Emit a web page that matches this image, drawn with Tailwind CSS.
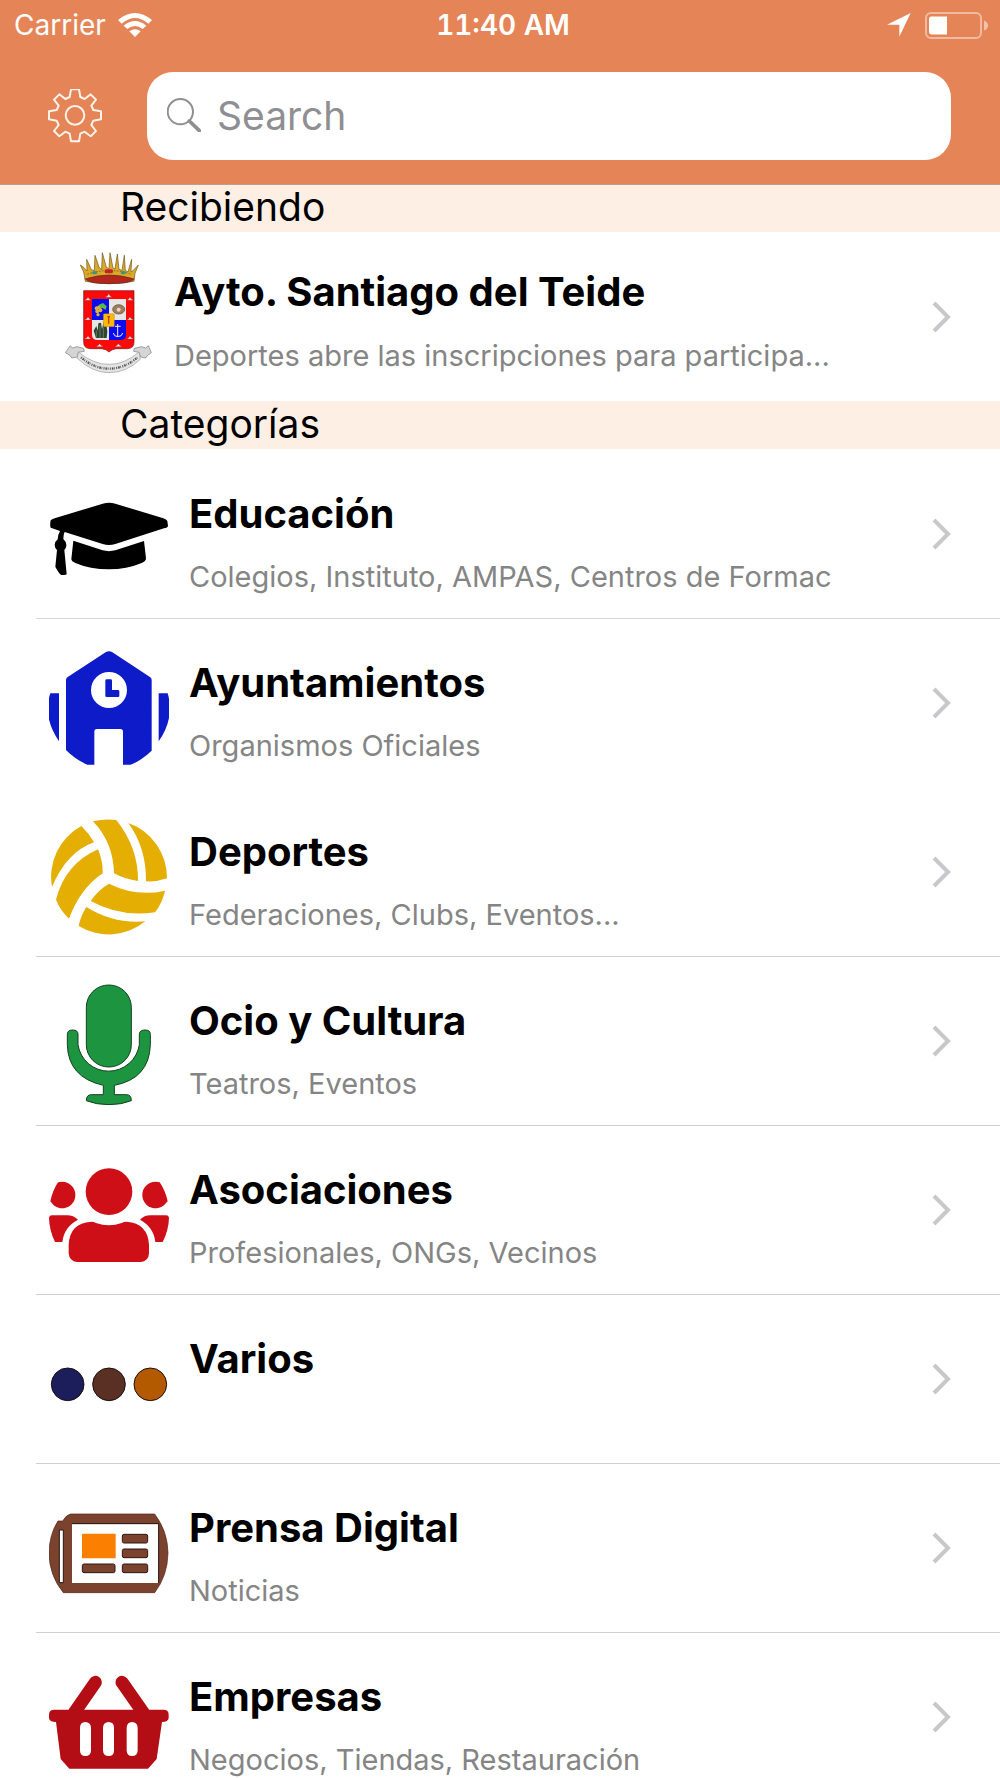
<!DOCTYPE html>
<html lang="es">
<head>
    <meta charset="UTF-8">
    <meta name="viewport" content="width=device-width, initial-scale=1.0">
    <title>Categorías</title>
    <script src="https://cdn.jsdelivr.net/npm/@tailwindcss/browser@4"></script>
</head>
<body class="h-screen overflow-hidden bg-white font-['Inter',sans-serif] text-black">
    <header class="bg-[#e58457] border-b border-[#b99f8d]">
        <!-- Status bar -->
        <div class="grid grid-cols-[1fr_auto_1fr] items-center h-[50px] pl-[14px] pr-2 text-white text-[28px]">
            <div class="flex items-center gap-3">
                <span>Carrier</span>
                <svg class="w-[34px] h-6" viewBox="0 0 102 72" fill="currentColor">
                    <path d="M0 21Q51 -21 102 21L91 32Q51 -2 11 32Z"></path>
                    <path d="M17 38Q51 10 85 38L74 48Q51 30 28 48Z"></path>
                    <path d="M34 55Q51 42 68 55L51 72Z"></path>
                </svg>
            </div>
            <div class="font-semibold tabular-nums">11:40 AM</div>
            <div class="flex items-center justify-end gap-[14px]">
                <svg class="w-6 h-6" viewBox="0 0 72 72" fill="currentColor">
                    <path d="M71 0L37 71V35H0Z"></path>
                </svg>
                <svg class="w-[67px] h-[27px]" viewBox="0 0 67 27">
                    <rect x="1" y="1" width="55" height="25" rx="5" fill="none" stroke="white" stroke-opacity=".45" stroke-width="2"></rect>
                    <path d="M6 4.5H22V22.5H7Q4 22.5 4 19.500V7Q4 4.500 6 4.500Z" fill="white"></path>
                    <path d="M59 8.500Q63 10 63 13.500T59 18.500Z" fill="white" fill-opacity=".5"></path>
                </svg>
            </div>
        </div>
        <!-- Settings and search -->
        <div class="flex items-center gap-[45px] pl-12 pr-[49px] pt-[22px] pb-6">
            <button type="button" aria-label="Ajustes" class="shrink-0">
                <svg class="w-[54px] h-[54px]" viewBox="-81 -79 162 162" fill="none" stroke="#fff3ec" stroke-width="6" stroke-linejoin="round">
                    <path d="M-12 -78L12 -78L16 -55L29 -49L47 -63L63 -47L49 -29L55 -16L78 -12L78 12L55 16L49 29L63 47L47 63L29 49L16 55L12 78L-12 78L-16 55L-29 49L-47 63L-63 47L-49 29L-55 16L-78 12L-78 -12L-55 -16L-49 -29L-63 -47L-47 -63L-29 -49L-16 -55Z"></path>
                    <circle r="28"></circle>
                </svg>
            </button>
            <div class="flex flex-1 items-center gap-4 h-[88px] pl-5 pr-5 pb-0.5 bg-white rounded-[26px]">
                <svg class="w-[34px] h-[34px] shrink-0" viewBox="0 0 102 102" fill="none" stroke="#8e8e93">
                    <circle cx="40" cy="41" r="38" stroke-width="6"></circle>
                    <path d="M67 69L97 98" stroke-width="11" stroke-linecap="round"></path>
                </svg>
                <label for="search" class="sr-only">Search</label>
                <input id="search" type="search" placeholder="Search" class="flex-1 min-w-0 h-full text-[39px] outline-none placeholder:text-[#8e8e93]">
            </div>
        </div>
    </header>

    <main>
        <h2 class="h-[47px] pl-[120px] bg-[#feefe4] text-[39px] leading-[44px]">Recibiendo</h2>
        <a href="#ayto" class="flex items-center h-[169px] pl-[65px] pr-[49px]">
            <svg class="w-[87px] h-[122px] mb-2 shrink-0" viewBox="76 36 261 366">
                <!-- Crown -->
                <path d="M122 75L133 83L142 93L141 58L155 89L164 92L166 46L179 84L186 88L188 38L200 82L208 86L211 38L220 84L226 87L233 42L238 88L247 91L254 46L257 91L265 96L276 58L274 96L281 91L296 75L286 100L283 124Q208 138 137 124L132 96Z" fill="#dba928" stroke="#6d5420" stroke-width="2"></path>
                <path d="M137 117Q208 93 283 117Q274 131 208 131Q148 131 137 117Z" fill="#b3261c" stroke="#5f2c16" stroke-width="2"></path>
                <path d="M143 103Q208 80 276 103" fill="none" stroke="#8f661a" stroke-width="3" stroke-dasharray="5 4"></path>
                <rect x="195" y="88" width="25" height="12" rx="5" fill="#c4202a"></rect>
                <ellipse cx="165" cy="98" rx="8" ry="5" fill="#37947d"></ellipse>
                <ellipse cx="251" cy="98" rx="8" ry="5" fill="#37947d"></ellipse>
                <!-- Shield -->
                <path d="M132 152H283V307Q283 325 264 326H232Q216 327 208 336Q200 327 184 326H151Q132 325 132 307Z" fill="#fb0a0a" stroke="#7c1010" stroke-width="2"></path>
                <path d="M157 177H208V240H157Z" fill="#0b0bf0"></path>
                <path d="M208 177H259V240H208Z" fill="#e6e6e6"></path>
                <path d="M157 240H208V300H174Q157 300 157 284Z" fill="#e6e6e6"></path>
                <path d="M208 240H259V284Q259 300 242 300H208Z" fill="#0b0bf0"></path>
                <g fill="#e0b13a">
                    <circle cx="171" cy="205" r="6"></circle><circle cx="179" cy="202" r="6"></circle><circle cx="173" cy="214" r="6"></circle>
                    <circle cx="182" cy="211" r="6"></circle><circle cx="175" cy="224" r="5"></circle>
                </g>
                <path d="M178 194L190 189L201 199L198 209L188 204L181 203Z" fill="#58b947"></path>
                <ellipse cx="237" cy="208" rx="18" ry="14" fill="#a07b5c" stroke="#5b4434" stroke-width="2"></ellipse>
                <ellipse cx="237" cy="209" rx="6" ry="6" fill="#e7d8c8"></ellipse>
                <path d="M169 294L162 272L170 258L174 272L176 250L184 248L187 268L192 246L200 254L203 274L201 294Z" fill="#2d4530"></path>
                <path d="M170 272V292M181 256V294M191 262V294" stroke="#809280" stroke-width="2"></path>
                <path d="M234 252V290M226 259H243M221 279Q223 290 234 290Q247 290 249 279" fill="none" stroke="#e9ebff" stroke-width="3"></path>
                <rect x="191" y="221" width="33" height="39" rx="3" fill="#fcb908" stroke="#a56f0c"></rect>
                <path d="M207 230V251M203 230H211" stroke="#d03b12" stroke-width="4"></path>
                <g fill="#f2e6e2" stroke="#8c2a22">
                    <path d="M196 172L203 168L207 161L211 167L217 172Z"></path>
                    <path d="M134 181L141 177L145 172L149 177L154 181ZM262 181L267 177L271 172L275 177L282 181Z"></path>
                    <path d="M134 240L141 236L145 231L149 236L154 240ZM262 240L267 236L271 231L275 236L282 240Z"></path>
                    <path d="M134 297L141 293L145 288L149 293L154 297ZM262 297L267 293L271 288L275 293L282 297Z"></path>
                    <path d="M169 320L176 316L180 311L184 316L191 320ZM225 320L232 316L236 311L240 316L247 320Z"></path>
                </g>
                <!-- Ribbon -->
                <path d="M77 338L92 317L98 324L112 320L131 325L134 334L116 337L113 351L96 354L91 346Z" fill="#d5d5d5" stroke="#777777" stroke-width="2"></path>
                <path d="M335 338L326 317L318 324L306 320L284 325L282 334L298 337L303 351L318 354L324 346Z" fill="#d5d5d5" stroke="#777777" stroke-width="2"></path>
                <path d="M116 336Q162 374 208 373Q254 374 298 336L302 358Q260 398 208 398Q158 398 113 355Z" fill="#e4e4e4" stroke="#999999" stroke-width="2"></path>
                <path d="M124 352Q164 386 208 386Q254 386 294 352" fill="none" stroke="#555555" stroke-width="7" stroke-dasharray="3 3 5 2 2 4"></path>
            </svg>
            <div class="flex flex-col flex-1 min-w-0 h-full gap-[22px] pt-9 pl-[22px]">
                <h3 class="truncate text-[40px] leading-[48px] font-bold">Ayto. Santiago del Teide</h3>
                <p class="truncate text-[29px] leading-[36px] text-[#858585]">Deportes abre las inscripciones para participa...</p>
            </div>
            <svg class="w-5 h-8 shrink-0" viewBox="0 0 20 32" fill="none" stroke="#c7c7cc" stroke-width="4"><path d="M3 2L17 16L3 30"></path></svg>
        </a>

        <h2 class="h-12 pl-[120px] bg-[#feefe4] text-[39px] leading-[46px]">Categorías</h2>
        <nav class="flex flex-col pt-px pl-9">
            <a href="#educacion" class="flex items-center h-[169px] pl-[13px] pr-[49px] pb-px border-b border-[#d8d8d8]">
                <svg class="w-[120px] h-[120px] mt-2 shrink-0" viewBox="57 21 360 360">
                    <path d="M62 148Q65 145 74 142L218 98Q237 93 256 98L400 142Q410 145 412 150L414 165Q413 170 402 172L256 219Q237 225 218 219L104 183Q101 187 100 204Q110 213 109 224Q108 232 103 237L110 310Q108 313 94 312Q86 307 76 287L81 237Q74 231 74 222Q74 212 83 205Q84 190 90 180L62 170Q59 162 62 148Z"></path>
                    <path d="M130 209L218 238Q237 243 256 238L342 210L348 262Q348 271 335 276Q290 295 237 295Q180 295 136 276Q124 271 124 264Z"></path>
                </svg>
                <div class="flex flex-col flex-1 min-w-0 h-full gap-[21px] pt-10 pl-5">
                    <h3 class="truncate text-[40px] leading-[48px] font-bold">Educación</h3>
                    <p class="truncate text-[29px] leading-[36px] text-[#858585]">Colegios, Instituto, AMPAS, Centros de Formac</p>
                </div>
                <svg class="w-5 h-8 shrink-0" viewBox="0 0 20 32" fill="none" stroke="#c7c7cc" stroke-width="4"><path d="M3 2L17 16L3 30"></path></svg>
            </a>

            <a href="#ayuntamientos" class="flex items-center h-[169px] pl-[13px] pr-[49px] pb-px border-b border-transparent">
                <svg class="w-[120px] h-[120px] mt-2 shrink-0" viewBox="57 528 360 360" fill="#0d1bc9">
                    <path d="M61 667H87V811Q37 738 61 667ZM386 667H413Q435 740 386 811Z"></path>
                    <path fill-rule="evenodd" d="M108 627Q108 622 112 619L228 543Q237 538 246 543L361 619Q365 622 365 627V839Q333 869 302 881H279V782Q279 774 271 774H201Q193 774 193 782V881H172Q135 865 108 837ZM237 603A54 54 0 1 0 237 711A54 54 0 1 0 237 603Z"></path>
                    <path d="M226 629Q226 625 230 625H242Q246 625 246 629V657H264Q268 657 268 661V674Q268 678 264 678H230Q226 678 226 674Z"></path>
                </svg>
                <div class="flex flex-col flex-1 min-w-0 h-full gap-[21px] pt-10 pl-5">
                    <h3 class="truncate text-[40px] leading-[48px] font-bold">Ayuntamientos</h3>
                    <p class="truncate text-[29px] leading-[36px] text-[#858585]">Organismos Oficiales</p>
                </div>
                <svg class="w-5 h-8 shrink-0" viewBox="0 0 20 32" fill="none" stroke="#c7c7cc" stroke-width="4"><path d="M3 2L17 16L3 30"></path></svg>
            </a>

            <a href="#deportes" class="flex items-center h-[169px] pl-[13px] pr-[49px] pb-px border-b border-[#d0d0d0]">
                <svg class="w-[120px] h-[120px] mt-2 shrink-0" viewBox="57 75 360 360" fill="#e4ae02">
                    <path d="M66 288A174 174 0 0 1 154 105Q176 126 192 154Q110 183 66 288Z"></path>
                    <path d="M204 175Q219 210 218 247Q150 293 117 383Q90 357 78 326Q106 218 204 175Z"></path>
                    <path d="M189 91Q225 82 259 87Q325 170 324 270Q285 265 252 247Q250 155 189 91Z"></path>
                    <path d="M295 96A174 174 0 0 1 411 262Q380 273 348 271Q349 170 295 96Z"></path>
                    <path d="M237 278Q320 319 405 299Q397 336 375 364Q270 379 182 330Q205 296 237 278Z"></path>
                    <path d="M169 348Q250 399 346 391A174 174 0 0 1 146 405Q152 375 169 348Z"></path>
                </svg>
                <div class="flex flex-col flex-1 min-w-0 h-full gap-[21px] pt-10 pl-5">
                    <h3 class="truncate text-[40px] leading-[48px] font-bold">Deportes</h3>
                    <p class="truncate text-[29px] leading-[36px] text-[#858585]">Federaciones, Clubs, Eventos...</p>
                </div>
                <svg class="w-5 h-8 shrink-0" viewBox="0 0 20 32" fill="none" stroke="#c7c7cc" stroke-width="4"><path d="M3 2L17 16L3 30"></path></svg>
            </a>

            <a href="#ocio" class="flex items-center h-[169px] pl-[13px] pr-[49px] pb-px border-b border-[#d0d0d0]">
                <svg class="w-[120px] h-[121px] mt-2 shrink-0" viewBox="57 582 360 363" fill="#1d9440" stroke="#14401f" stroke-width="3">
                    <rect x="169" y="585" width="135" height="246" rx="67"></rect>
                    <path d="M112 733Q112 720 128 720Q144 720 144 733V764A93 93 0 0 0 328 764V733Q328 720 345 720Q361 720 361 733V764Q358 866 253 886V914H290Q304 914 304 932Q275 944 237 944Q198 944 169 932Q169 914 184 914H220V886Q114 862 112 764Z"></path>
                </svg>
                <div class="flex flex-col flex-1 min-w-0 h-full gap-[21px] pt-10 pl-5">
                    <h3 class="truncate text-[40px] leading-[48px] font-bold">Ocio y Cultura</h3>
                    <p class="truncate text-[29px] leading-[36px] text-[#858585]">Teatros, Eventos</p>
                </div>
                <svg class="w-5 h-8 shrink-0" viewBox="0 0 20 32" fill="none" stroke="#c7c7cc" stroke-width="4"><path d="M3 2L17 16L3 30"></path></svg>
            </a>

            <a href="#asociaciones" class="flex items-center h-[169px] pl-[13px] pr-[49px] pb-px border-b border-[#d0d0d0]">
                <svg class="w-[120px] h-[120px] mt-2 shrink-0" viewBox="57 39 360 360" fill="#ce0f18">
                    <circle cx="237" cy="152" r="70"></circle>
                    <path d="M84 124Q88 122 96 122A40 40 0 1 1 71 193L61 181Q68 148 84 124Z"></path>
                    <path d="M389 124Q385 122 378 122A40 40 0 1 0 402 193L413 181Q406 148 389 124Z"></path>
                    <path d="M57 230Q58 223 66 223H112Q130 223 144 236Q102 258 97 303H75Q58 268 57 230Z"></path>
                    <path d="M417 230Q416 223 408 223H361Q343 223 330 236Q371 258 376 303H398Q416 268 417 230Z"></path>
                    <path d="M116 312Q118 246 184 242Q192 242 198 246Q237 260 275 246Q282 242 290 242Q354 247 357 312V337Q356 361 332 363H141Q118 361 116 337Z"></path>
                </svg>
                <div class="flex flex-col flex-1 min-w-0 h-full gap-[21px] pt-10 pl-5">
                    <h3 class="truncate text-[40px] leading-[48px] font-bold">Asociaciones</h3>
                    <p class="truncate text-[29px] leading-[36px] text-[#858585]">Profesionales, ONGs, Vecinos</p>
                </div>
                <svg class="w-5 h-8 shrink-0" viewBox="0 0 20 32" fill="none" stroke="#c7c7cc" stroke-width="4"><path d="M3 2L17 16L3 30"></path></svg>
            </a>

            <a href="#varios" class="flex items-center h-[169px] pl-[13px] pr-[49px] pb-px border-b border-[#d0d0d0]">
                <svg class="w-[120px] h-[120px] mt-2 shrink-0" viewBox="57 546 360 360" stroke="#1c1010" stroke-width="3">
                    <circle cx="113" cy="730" r="49" fill="#1b1e5b"></circle>
                    <circle cx="237" cy="730" r="49" fill="#593023"></circle>
                    <circle cx="361" cy="730" r="49" fill="#b35900"></circle>
                </svg>
                <div class="flex flex-col flex-1 min-w-0 h-full gap-[21px] pt-10 pl-5">
                    <h3 class="truncate text-[40px] leading-[48px] font-bold">Varios</h3>
                </div>
                <svg class="w-5 h-8 shrink-0" viewBox="0 0 20 32" fill="none" stroke="#c7c7cc" stroke-width="4"><path d="M3 2L17 16L3 30"></path></svg>
            </a>

            <a href="#prensa" class="flex items-center h-[169px] pl-[13px] pr-[49px] pb-px border-b border-[#d0d0d0]">
                <svg class="w-[120px] h-[120px] mt-2 shrink-0" viewBox="57 33 360 360" fill="#7b432d">
                    <path d="M84 120H98Q108 102 122 99H374Q413 150 414 216Q413 284 374 335H100Q58 284 57 216Q58 160 84 120Z" stroke="#4b2119" stroke-width="2"></path>
                    <path d="M88 147H100V305H88Z" fill="white" stroke="#261713" stroke-width="3"></path>
                    <path d="M126 129H385V306H126Z" fill="white"></path>
                    <path d="M126 128H386V306" fill="none" stroke="#261713" stroke-width="3"></path>
                    <path d="M156 158H257V232H156Z" fill="#fb7f00"></path>
                    <g stroke="#2d1813" stroke-width="3">
                        <rect x="277" y="160" width="76" height="26" rx="5"></rect>
                        <rect x="277" y="204" width="76" height="26" rx="5"></rect>
                        <rect x="277" y="249" width="76" height="26" rx="5"></rect>
                        <rect x="157" y="249" width="98" height="26" rx="5"></rect>
                    </g>
                </svg>
                <div class="flex flex-col flex-1 min-w-0 h-full gap-[21px] pt-10 pl-5">
                    <h3 class="truncate text-[40px] leading-[48px] font-bold">Prensa Digital</h3>
                    <p class="truncate text-[29px] leading-[36px] text-[#858585]">Noticias</p>
                </div>
                <svg class="w-5 h-8 shrink-0" viewBox="0 0 20 32" fill="none" stroke="#c7c7cc" stroke-width="4"><path d="M3 2L17 16L3 30"></path></svg>
            </a>

            <a href="#empresas" class="flex items-center h-[169px] pl-[13px] pr-[49px] pb-px border-b border-transparent">
                <svg class="w-[120px] h-[120px] mt-2 shrink-0" viewBox="57 540 360 360" fill="#b30d15">
                    <path d="M133 695L196 604M340 695L276 604" stroke="#b30d15" stroke-width="39" stroke-linecap="round"></path>
                    <path fill-rule="evenodd" d="M73 686H401Q416 686 416 701V710Q415 723 396 723L380 834L354 863H118L92 834L78 723Q58 723 57 710V701Q57 686 73 686ZM166 723Q150 724 150 740V809Q151 825 166 825Q182 825 183 809V740Q182 724 166 723ZM236 723Q220 724 219 740V809Q220 825 236 825Q252 825 252 809V740Q252 724 236 723ZM306 723Q291 724 290 740V809Q291 825 306 825Q322 825 323 809V740Q322 724 306 723Z"></path>
                </svg>
                <div class="flex flex-col flex-1 min-w-0 h-full gap-[21px] pt-10 pl-5">
                    <h3 class="truncate text-[40px] leading-[48px] font-bold">Empresas</h3>
                    <p class="truncate text-[29px] leading-[36px] text-[#858585]">Negocios, Tiendas, Restauración</p>
                </div>
                <svg class="w-5 h-8 shrink-0" viewBox="0 0 20 32" fill="none" stroke="#c7c7cc" stroke-width="4"><path d="M3 2L17 16L3 30"></path></svg>
            </a>
        </nav>
    </main>
</body>
</html>
